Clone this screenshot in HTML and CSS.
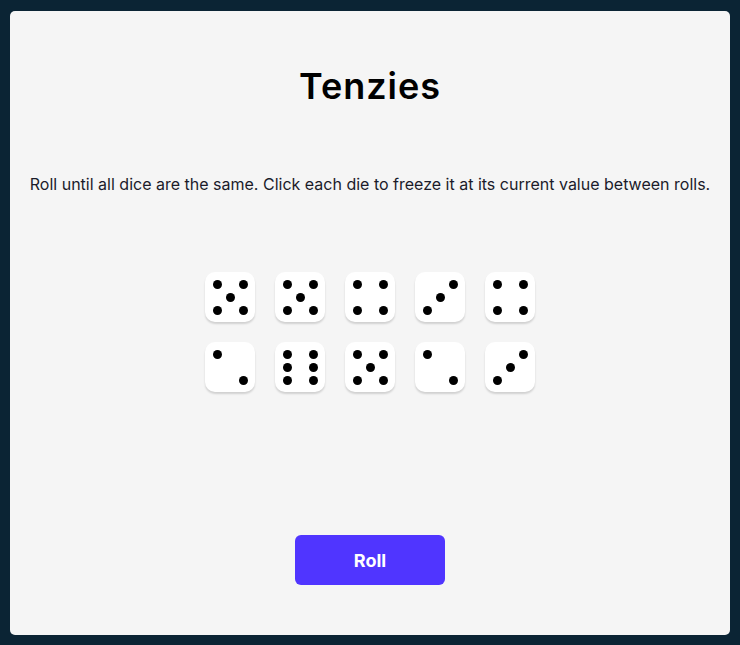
FILE: index.html
```html
<!DOCTYPE html>
<html lang="en">
<head>
<meta charset="utf-8">
<title>Tenzies</title>
<link rel="stylesheet" href="styles.css">
</head>
<body>
<main class="game">
  <h1 class="title">Tenzies</h1>
  <p class="instructions">Roll until all dice are the same. Click each die to freeze it at its current value between rolls.</p>
  <div class="dice">
    <button class="die v5"><span></span><span></span><span></span><span></span><span></span></button>
    <button class="die v5"><span></span><span></span><span></span><span></span><span></span></button>
    <button class="die v4"><span></span><span></span><span></span><span></span></button>
    <button class="die v3"><span></span><span></span><span></span></button>
    <button class="die v4"><span></span><span></span><span></span><span></span></button>
    <button class="die v2"><span></span><span></span></button>
    <button class="die v6"><span></span><span></span><span></span><span></span><span></span><span></span></button>
    <button class="die v5"><span></span><span></span><span></span><span></span><span></span></button>
    <button class="die v2"><span></span><span></span></button>
    <button class="die v3"><span></span><span></span><span></span></button>
  </div>
  <button class="roll">Roll</button>
</main>
</body>
</html>
```
FILE: styles.css
```css
* { box-sizing: border-box; }
html, body { margin: 0; height: 100%; }
body {
  background: #0B2434;
  padding: 11px 10px 10px;
  display: flex;
  font-family: Inter, "Noto Sans", sans-serif;
}
.game {
  flex: 1;
  background: #F5F5F5;
  border-radius: 5px;
  display: flex;
  flex-direction: column;
  align-items: center;
}
.title {
  margin: 50px 0 0;
  font-size: 36px;
  line-height: 50px;
  font-weight: 600;
  letter-spacing: 1px;
  color: #000;
}
.instructions {
  margin: 63px 0 0;
  font-size: 16px;
  line-height: 20px;
  color: #1b1b2a;
  text-align: center;
}
.dice {
  margin-top: 78px;
  display: grid;
  grid-template-columns: repeat(5, 50px);
  gap: 20px;
}
.die {
  width: 50px;
  height: 50px;
  border: none;
  padding: 0;
  background: #fff;
  border-radius: 10px;
  box-shadow: 0 2px 2px rgba(0,0,0,0.15);
  display: grid;
  grid-template-columns: repeat(3, 13px);
  grid-template-rows: repeat(3, 13px);
  place-content: center;
}
.die span {
  width: 9px;
  height: 9px;
  border-radius: 50%;
  background: #000;
  place-self: center;
}
.v2 span:nth-child(1) { grid-area: 1 / 1; }
.v2 span:nth-child(2) { grid-area: 3 / 3; }
.v3 span:nth-child(1) { grid-area: 3 / 1; }
.v3 span:nth-child(2) { grid-area: 2 / 2; }
.v3 span:nth-child(3) { grid-area: 1 / 3; }
.v4 span:nth-child(1), .v5 span:nth-child(1), .v6 span:nth-child(1) { grid-area: 1 / 1; }
.v4 span:nth-child(2), .v5 span:nth-child(2), .v6 span:nth-child(2) { grid-area: 1 / 3; }
.v4 span:nth-child(3), .v5 span:nth-child(3), .v6 span:nth-child(3) { grid-area: 3 / 1; }
.v4 span:nth-child(4), .v5 span:nth-child(4), .v6 span:nth-child(4) { grid-area: 3 / 3; }
.v5 span:nth-child(5) { grid-area: 2 / 2; }
.v6 span:nth-child(5) { grid-area: 2 / 1; }
.v6 span:nth-child(6) { grid-area: 2 / 3; }
.roll {
  margin-top: 143px;
  width: 150px;
  height: 50px;
  border: none;
  border-radius: 6px;
  background: #5035FF;
  color: #fff;
  font-family: Inter, "Noto Sans", sans-serif;
  font-size: 18px;
  font-weight: 700;
}
```
